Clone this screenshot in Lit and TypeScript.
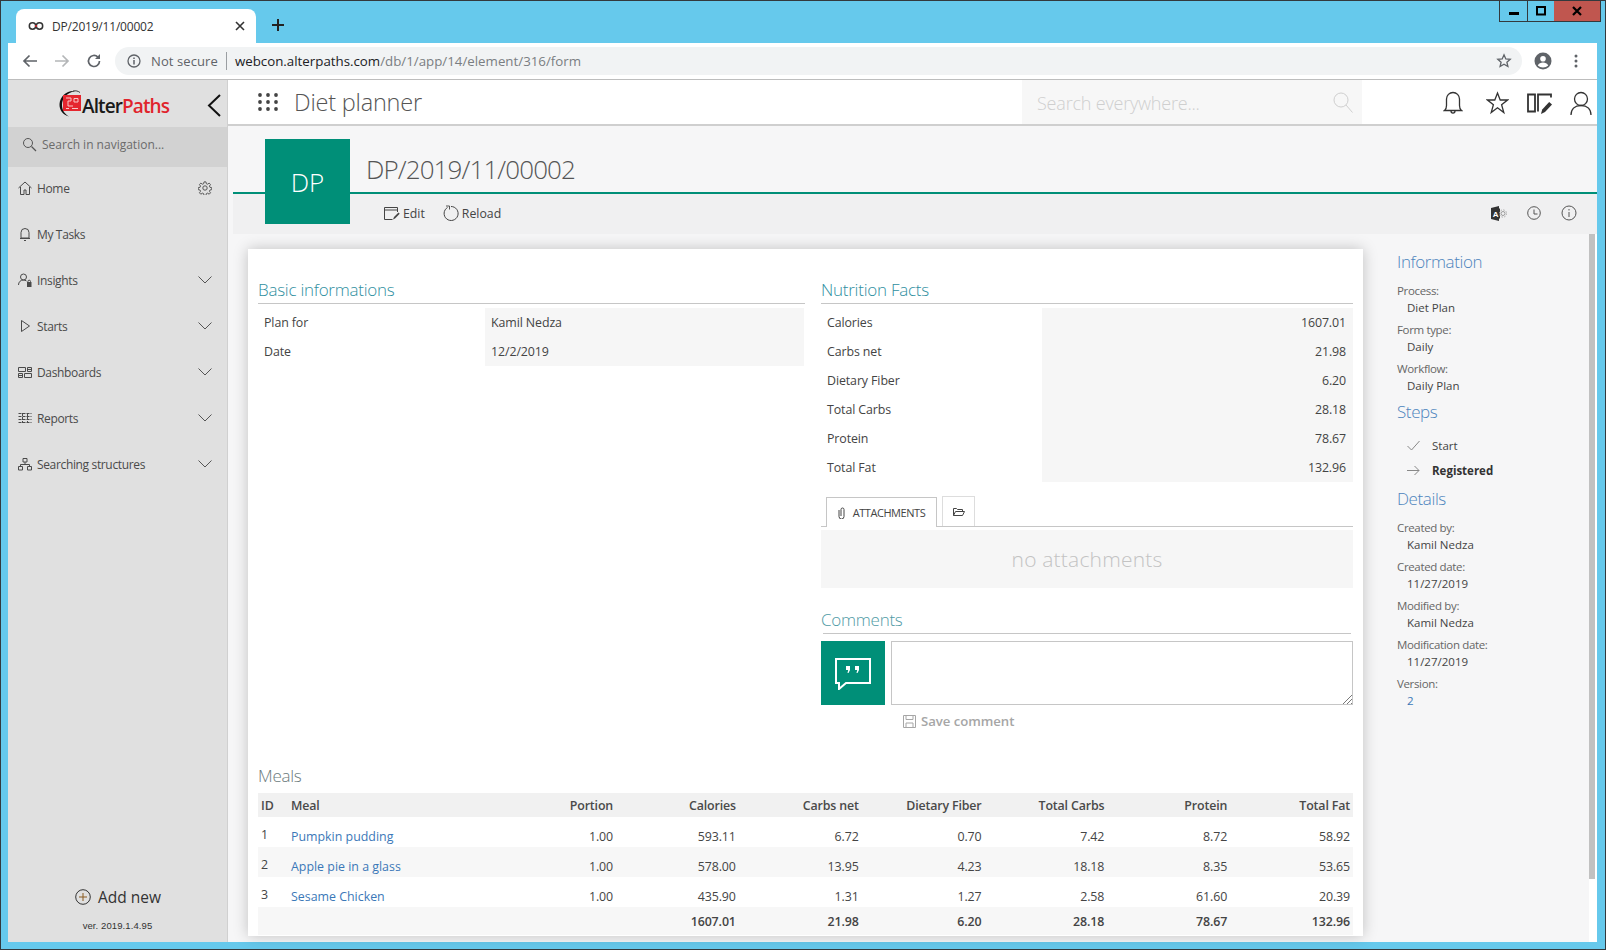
import { LitElement, html, css, svg } from "lit";
import { customElement } from "lit/decorators.js";

const ic = (w: number, h: number, body: unknown, cls = "") =>
  html`<svg class="ic ${cls}" width=${w} height=${h} viewBox="0 0 ${w} ${h}" fill="none" stroke="currentColor" stroke-width="1">${body}</svg>`;

const chevron = ic(14, 8, svg`<path d="M.5 .5 7 7 13.500 .5"/>`, "chev");

const nav = [
  { t: "Home", i: ic(14, 14, svg`<path d="M.5 7 7 1l6.500 6M2.500 6v7.500h3.500V9h2v4.500h3.500V6"/>`), gear: true },
  { t: "My Tasks", i: ic(14, 14, svg`<path d="M3 11V5.500a4 4 0 0 1 8 0V11zM2 11.500h10M6 13.500h2"/>`) },
  { t: "Insights", c: true, i: ic(14, 14, svg`<circle cx="5.500" cy="4" r="3"/><path d="M.5 12c0-3 2-5 5-5 1 0 2 .3 3 1"/><rect x="9.500" y="9.500" width="3.500" height="4" fill="currentColor"/><circle cx="11.200" cy="8.500" r="1.300"/>`) },
  { t: "Starts", c: true, i: ic(14, 14, svg`<path d="M3.500 1.500v11l8-5.500z"/>`) },
  { t: "Dashboards", c: true, i: ic(14, 14, svg`<path d="M.5 2.500h7v4h-7zM9.500 2.500h4v4h-4zM.5 8.500h4v4h-4zM6.500 8.500h7v4h-7zM9.500 4.500h4M.5 10.500h4"/>`) },
  { t: "Reports", c: true, i: ic(14, 14, svg`<path d="M.5 2.500h13M.5 5.500h13M.5 8.500h13M.5 11.500h13M4.500 2v10M9.500 2v10" stroke-dasharray="3 1"/>`) },
  { t: "Searching structures", c: true, i: ic(14, 14, svg`<path d="M5 1.500h4v3.500H5zM.5 9.500h4v3.500h-4zM9.500 9.500h4v3.500h-4zM7 5v2.500M2.500 9.500v-2h9v2"/>`) },
];

const nutrition = [
  ["Calories", "1607.01"], ["Carbs net", "21.98"], ["Dietary Fiber", "6.20"],
  ["Total Carbs", "28.18"], ["Protein", "78.67"], ["Total Fat", "132.96"],
];
const heads = ["Portion", "Calories", "Carbs net", "Dietary Fiber", "Total Carbs", "Protein", "Total Fat"];
const meals = [
  ["1", "Pumpkin pudding", "1.00", "593.11", "6.72", "0.70", "7.42", "8.72", "58.92"],
  ["2", "Apple pie in a glass", "1.00", "578.00", "13.95", "4.23", "18.18", "8.35", "53.65"],
  ["3", "Sesame Chicken", "1.00", "435.90", "1.31", "1.27", "2.58", "61.60", "20.39"],
];
const totals = ["", "1607.01", "21.98", "6.20", "28.18", "78.67", "132.96"];

@customElement("app-root")
export class AppRoot extends LitElement {
  static styles = css`
    :host { display: block; width: 1606px; height: 950px; overflow: hidden; font-family: "Open Sans", "Noto Sans", sans-serif; color: #444; font-size: 12px; }
    * { box-sizing: border-box; }
    .ic { display: block; flex: none; }
    .window { position: relative; width: 1606px; height: 950px; background: #66c9ec; border: 1px solid #33393d; display: flex; flex-direction: column; }
    .tabs { height: 42px; padding: 8px 0 0 15px; display: flex; align-items: flex-start; flex: none; }
    .tab { width: 240px; height: 34px; background: #fff; border-radius: 8px 8px 0 0; display: flex; align-items: center; padding: 0 11px 0 12px; color: #333; }
    .tab span { margin-left: 8px; flex: 1; font-size: 12px; letter-spacing: -.2px; }
    .plus { margin: 9px 0 0 15px; color: #222; }
    .winbtns { position: absolute; top: 0; right: 4px; height: 21px; display: flex; border: 1px solid #33393d; border-top: 0; }
    .winbtns div { display: flex; align-items: center; justify-content: center; height: 100%; color: #000; }
    .wmin { width: 28px; border-right: 1px solid #33393d; }
    .wmax { width: 26px; }
    .wclose { width: 46px; background: #c0564f; }
    .toolbar { height: 36px; margin: 0 8px 0 7px; background: #fff; display: flex; align-items: center; padding: 0 19px 0 14px; flex: none; color: #5f6368; }
    .toolbar .fwd { color: #b4b6b8; margin-left: 16px; }
    .toolbar .rld { margin-left: 16px; }
    .omni { flex: 1; height: 28px; margin: 0 12px 0 13px; border-radius: 14px; background: #f1f3f4; display: flex; align-items: center; padding: 0 10px 0 12px; font-size: 13px; }
    .omni .ns { margin-left: 10px; color: #5f6368; font-size: 13px; letter-spacing: .1px; }
    .omni .sep { width: 1px; height: 18px; background: #9a9ea2; margin: 0 8px; }
    .omni .url { flex: 1; color: #7a7e82; font-size: 13.300px; }
    .omni .url b { font-weight: 400; color: #202124; }
    .profile { margin-right: 22px; }
    .body { flex: 1; margin: 0 8px 7px 7px; display: flex; min-height: 0; border-top: 1px solid #bdbdbd; }
    .side { width: 220px; flex: none; background: #e0e0e0; border-right: 1px solid #d0d0d0; display: flex; flex-direction: column; }
    .logo { height: 47px; display: flex; align-items: center; position: relative; padding: 1px 0 0 50px; flex: none; }
    .logo .name { font: 600 19px "Open Sans", sans-serif; color: #1a1a1a; letter-spacing: -.9px; margin-top: 3px; }
    .logo .name em { font-style: normal; color: #e0242c; }
    .back { position: absolute; left: 199px; top: 14px; color: #111; }
    .navsearch { height: 40px; background: #d2d2d2; display: flex; align-items: center; gap: 5px; padding: 0 14px 6px; flex: none; color: #6b6b6b; font-size: 12px; }
    .navsearch svg { color: #555; }
    .items { flex: 1; }
    .item { height: 46px; display: flex; align-items: center; padding: 0 15px 0 10px; gap: 5px; color: #4a4a4a; font-size: 12px; letter-spacing: -.35px; }
    .item:first-child { height: 44px; padding-bottom: 2px; }
    .item span { flex: 1; }
    .item .chev, .item .gear { color: #555; }
    .add { display: flex; align-items: center; justify-content: center; gap: 7px; font-size: 15.500px; color: #333; margin: 1px 0 -1px 1px; }
    .ver { text-align: center; font-family: "Liberation Sans", sans-serif; font-size: 9.500px; color: #333; margin: 13px 0 10px; letter-spacing: .1px; height: 12px; }
    .main { flex: 1; min-width: 0; display: flex; flex-direction: column; background: #f6f6f7; }
    .topbar { height: 46px; flex: none; background: #fff; border-bottom: 2px solid #cfcfcf; display: flex; align-items: stretch; color: #333; }
    .apps { margin: 13px 0 0 30px; color: #444; }
    .topbar h1 { margin: 0 0 0 16px; width: 728px; font-weight: 300; font-size: 23.500px; color: #555; line-height: 44px; letter-spacing: -.2px; }
    .bigsearch { width: 340px; background: #f7f7f7; display: flex; align-items: center; justify-content: space-between; padding: 2px 9px 0 15px; color: #cfcfcf; font-weight: 300; font-size: 18px; letter-spacing: -.2px; }
    .tops { display: flex; align-items: center; flex: 1; padding: 2px 0 0 81px; gap: 18px; }
    .tops .bell { margin-right: 5px; }
    .head { height: 108px; flex: none; position: relative; padding: 0 0 0 5px; display: flex; flex-direction: column; }
    .title { height: 68px; border-bottom: 2px solid #008f78; padding: 23px 0 0 133px; font-weight: 300; font-size: 26px; line-height: 40px; color: #555; letter-spacing: -.9px; flex: none; white-space: nowrap; }
    .tile { position: absolute; left: 37px; top: 13px; width: 85px; height: 85px; background: #008f78; color: #fff; font-weight: 300; font-size: 26px; display: flex; align-items: center; justify-content: center; padding-top: 1px; }
    .actions { height: 40px; background: #f0f0f1; display: flex; align-items: center; padding: 0 20px 2px 151px; font-size: 12.300px; color: #444; }
    .actions .btn { display: flex; align-items: center; gap: 3px; margin-right: 18px; }
    .actions .right { margin-left: auto; display: flex; gap: 20px; align-items: center; color: #555; }
    .xl { font: 700 8px "Liberation Sans", sans-serif; fill: #fff; stroke: none; }
    .content { flex: 1; min-height: 0; display: flex; }
    .card { width: 1115px; flex: none; margin: 15px 0 6px 20px; background: #fff; box-shadow: 0 0 14px rgba(0, 0, 0, .22); padding: 30px 10px 0; overflow: hidden; }
    .cols { display: grid; grid-template-columns: 547px 532px; gap: 16px; height: 485px; }
    .h { font-weight: 300; font-size: 17px; color: #2f8f9f; height: 25px; line-height: 22px; border-bottom: 1px solid #c6c6c6; letter-spacing: -.25px; }
    .rows { margin-top: 4px; }
    .row { display: grid; height: 29px; align-items: center; font-size: 12.400px; letter-spacing: -.1px; color: #444; }
    .row.a { grid-template-columns: 227px 1fr; margin-right: 1px; }
    .row.b { grid-template-columns: 221px 1fr; }
    .row > :first-child { padding-left: 6px; }
    .row > :last-child { background: #f6f6f6; height: 100%; display: flex; align-items: center; padding: 0 7px 0 6px; }
    .row.b > :last-child { justify-content: flex-end; }
    .attach { display: flex; align-items: flex-end; padding-left: 5px; height: 30px; margin-top: 15px; border-bottom: 1px solid #c6c6c6; gap: 5px; }
    .attach > div { height: 30px; display: flex; align-items: center; justify-content: center; gap: 8px; background: #fff; border: 1px solid #c6c6c6; border-bottom: 0; font-size: 11px; letter-spacing: -.45px; color: #444; margin-bottom: -1px; }
    .attach .t1 { width: 111px; }
    .attach .t2 { width: 33px; border-color: #ddd; margin-bottom: 0; }
    .none { margin-top: 3px; height: 58px; background: #f6f6f6; color: #c3c3c3; font-size: 21px; font-weight: 300; display: flex; align-items: center; justify-content: center; letter-spacing: .2px; }
    .h.cm { margin: 21px 2px 0; color: #4f9aa5; text-indent: -2px; }
    .commentrow { display: flex; gap: 6px; margin-top: 7px; height: 64px; }
    .bubble { width: 64px; background: #008f78; color: #fff; display: flex; align-items: center; justify-content: center; }
    .area { flex: 1; border: 1px solid #c6c6c6; position: relative; }
    .grip { position: absolute; right: 0; bottom: 0; color: #555; }
    .save { display: flex; align-items: center; gap: 5px; margin: 7px 0 0 82px; color: #a6a6a6; font-size: 13.200px; font-weight: 600; letter-spacing: -.05px; }
    .mh { font-weight: 300; font-size: 17px; color: #6a7a7c; height: 29px; line-height: 24px; letter-spacing: -.25px; }
    .grid { display: grid; grid-template-columns: 33px 1fr repeat(7, 122.830px); font-size: 12.400px; letter-spacing: -.1px; color: #444; }
    .grid > div { display: flex; align-items: center; }
    .grid .r { justify-content: flex-end; padding-right: 3px; }
    .grid .th { background: #f1f1f1; height: 24px; font-weight: 600; color: #4a4a4a; letter-spacing: -.15px; }
    .grid .id { padding-left: 3px; }
    .grid .td { height: 30px; padding-top: 9px; }
    .grid .idc { padding-top: 5px; }
    .grid .alt { background: #f7f7f7; }
    .grid a { color: #3b78b8; letter-spacing: 0; }
    .grid .tot { background: #f7f7f7; height: 28px; padding-top: 1px; font-weight: 600; }
    .info { flex: 1; padding: 15px 0 0 34px; font-size: 11.500px; color: #555; line-height: 17px; }
    .info h3 { margin: 0; font-weight: 300; font-size: 17px; line-height: 26px; color: #4d84bd; letter-spacing: -.4px; height: 26px; }
    .info .l { color: #666; letter-spacing: -.35px; margin-top: 5px; }
    .info .v { color: #444; padding-left: 10px; }
    .info .v a { color: #3b78b8; }
    .info h3 + .l { margin-top: 7px; }
    .step { display: flex; align-items: center; gap: 12px; height: 25px; padding-left: 10px; color: #444; }
    .step svg { color: #888; }
    .step b { font-weight: 700; color: #333; }
    .steps { padding-top: 8px; height: 61px; }
    h3.s { margin-top: 5px; }
    .scroll { width: 8px; flex: none; padding-right: 2px; background: #fff; }
    .thumb { width: 6px; height: 645px; background: #c1c1c1; }
  `;

  render() {
    return html`<div class="window">
      <div class="tabs">
        <div class="tab">
          ${ic(16, 10, svg`<circle cx="4.500" cy="5" r="3.200" stroke-width="1.500" stroke="#333"/><circle cx="11.500" cy="5" r="3.200" stroke-width="1.500" stroke="#333"/><path d="M7 5h2" stroke="#e0242c" stroke-width="1.500"/>`)}
          <span>DP/2019/11/00002</span>
          ${ic(10, 10, svg`<path d="M1 1l8 8M9 1l-8 8" stroke-width="1.600"/>`)}
        </div>
        <div class="plus">${ic(14, 14, svg`<path d="M7 1v12M1 7h12" stroke-width="2"/>`)}</div>
      </div>
      <div class="winbtns">
        <div class="wmin">${ic(10, 10, svg`<path d="M0 7.500h10" stroke-width="3"/>`)}</div>
        <div class="wmax">${ic(10, 10, svg`<rect x="1" y="1" width="8" height="7.500" stroke-width="2"/>`)}</div>
        <div class="wclose">${ic(10, 10, svg`<path d="M1 1l8 8M9 1l-8 8" stroke-width="2.200"/>`)}</div>
      </div>
      <div class="toolbar">
        ${ic(16, 14, svg`<path d="M15 7H2M7.500 1.500 2 7l5.500 5.500" stroke-width="1.700"/>`)}
        <div class="fwd">${ic(16, 14, svg`<path d="M1 7h13M8.500 1.500 14 7l-5.500 5.500" stroke-width="1.700"/>`)}</div>
        <div class="rld">${ic(16, 16, svg`<path d="M13.500 8a5.500 5.500 0 1 1-1.600-3.900" stroke-width="1.700"/><path d="M14 1v5h-5z" fill="currentColor" stroke="none"/>`)}</div>
        <div class="omni">
          ${ic(14, 14, svg`<circle cx="7" cy="7" r="6" stroke-width="1.300"/><path d="M7 6v4.500M7 3.500v1.500" stroke-width="1.500"/>`)}
          <span class="ns">Not secure</span><i class="sep"></i>
          <span class="url"><b>webcon.alterpaths.com</b>/db/1/app/14/element/316/form</span>
          ${ic(16, 16, svg`<path d="M8 1.800l1.800 4.100 4.400.4-3.300 2.900 1 4.300L8 11.200l-3.900 2.300 1-4.300-3.300-2.900 4.400-.4z" stroke-width="1.300"/>`)}
        </div>
        <div class="profile">${ic(18, 18, svg`<circle cx="9" cy="9" r="8.500" fill="currentColor" stroke="none"/><circle cx="9" cy="6.800" r="2.800" fill="#fff" stroke="none"/><path d="M3.800 13.500c1-2.200 3-3 5.200-3s4.200.8 5.200 3c-1.300 1.300-3.200 2-5.200 2s-3.900-.7-5.200-2z" fill="#fff" stroke="none"/>`)}</div>
        ${ic(4, 14, svg`<circle cx="2" cy="2" r="1.500" fill="currentColor" stroke="none"/><circle cx="2" cy="7" r="1.500" fill="currentColor" stroke="none"/><circle cx="2" cy="12" r="1.500" fill="currentColor" stroke="none"/>`)}
      </div>
      <div class="body">
        <aside class="side">
          <div class="logo">
            ${ic(24, 30, svg`<path d="M17 2C9 1 2 7 1.500 15c-.3 6 3.500 11 9.500 12.500C6.500 25 4 21 4 16 4 10 8 4 17 2z" fill="#111" stroke="none"/><path d="M15 2c3-.5 5 0 7 1.500" stroke="#111" stroke-width=".8"/><rect x="5" y="6" width="18" height="16" fill="#e5262e" stroke="none"/><path d="M8 9h5v3h-3v5h5M16 9.500h4v3.500h-4zM8 19.500h3M14 19.500h6" stroke="#f8c8c8" stroke-width="1"/>`)}
            <span class="name">Alter<em>Paths</em></span>
            <div class="back">${ic(14, 23, svg`<path d="M13 1 2 11.500 13 22" stroke-width="2"/>`)}</div>
          </div>
          <div class="navsearch">${ic(15, 15, svg`<circle cx="6" cy="6" r="4.500"/><path d="M9.500 9.500 14 14" stroke-width="1.200"/>`)}<span>Search in navigation...</span></div>
          <div class="items">
            ${nav.map((n) => html`<div class="item">${n.i}<span>${n.t}</span>
              ${n.c ? chevron : ""}
              ${n.gear ? ic(14, 14, svg`<circle cx="7" cy="7" r="2.200"/><path d="M6 .7h2l.4 1.900 1.300.5 1.600-1.100 1.400 1.400-1.100 1.600.5 1.300 1.900.4v2l-1.900.4-.5 1.300 1.100 1.600-1.400 1.400-1.600-1.100-1.300.5-.4 1.900H6l-.4-1.900-1.300-.5-1.600 1.100-1.400-1.400 1.100-1.600-.5-1.300-1.900-.4v-2l1.900-.4.5-1.300L1.300 3.400l1.400-1.400 1.600 1.100 1.300-.5z" transform="translate(.2 .2) scale(.97)"/>`, "gear") : ""}
            </div>`)}
          </div>
          <div class="add">${ic(16, 16, svg`<circle cx="8" cy="8" r="7.300"/><path d="M8 4v8M4 8h8" stroke="#8a5a20"/>`)}<span>Add new</span></div>
          <div class="ver">ver. 2019.1.4.95</div>
        </aside>
        <div class="main">
          <div class="topbar">
            <div class="apps">${ic(20, 18, svg`${[2, 9, 16].map((y) => [2, 10, 18].map((x) => svg`<circle cx=${x} cy=${y} r="1.900" fill="currentColor" stroke="none"/>`))}`)}</div>
            <h1>Diet planner</h1>
            <div class="bigsearch"><span>Search everywhere...</span>${ic(20, 22, svg`<circle cx="8" cy="8" r="7"/><path d="M13 13l6.500 7.500"/>`)}</div>
            <div class="tops">
              ${ic(20, 25, svg`<path d="M1.500 19.500c1.500-1 2-2.500 2-5V8a6.500 6.500 0 0 1 13 0v6.500c0 2.500.5 4 2 5zM8 20c0 2.800 4 2.800 4 0" stroke-width="1.300"/>`, "bell")}
              ${ic(23, 24, svg`<path d="M11.500 2l2.700 7h7.300l-5.900 4.700 2.200 7.800-6.300-4.700-6.300 4.700 2.200-7.800L1.500 9h7.300z" stroke-width="1.300"/>`)}
              ${ic(25, 24, svg`<path d="M1 3.500h7v17H1zM11 20.500v-17h13v3" stroke-width="1.800"/><path d="M14 23l1.200-4.500 7-7.500 2.800 2.500-7 7.500z" fill="#333" stroke="none"/>`)}
              ${ic(22, 25, svg`<circle cx="11" cy="8" r="6.500" stroke-width="1.300"/><path d="M1 24c0-6 4-9.500 10-9.500S21 18 21 24" stroke-width="1.300"/>`)}
            </div>
          </div>
          <div class="head">
            <div class="title">DP/2019/11/00002</div>
            <div class="tile">DP</div>
            <div class="actions">
              <div class="btn">${ic(16, 15, svg`<path d="M13.500 6V1.500H.5v12h8M.5 4h13"/><path d="M9 13.500l1-2.500 4.500-4.500 1.200 1.200L11 12.500z" fill="currentColor" stroke="none"/>`)}<span>Edit</span></div>
              <div class="btn">${ic(16, 16, svg`<path d="M4.500 2.500a7 7 0 1 0 3.500-1"/><path d="M3 1h3.500v3.500" stroke-width=".9"/>`)}<span>Reload</span></div>
              <div class="right">
                ${ic(16, 15, svg`<path d="M0 2 8 0v15l-8-2z" fill="#333" stroke="none"/><path d="M8 2.500h1v10H8z" fill="#333" stroke="none"/><text x="1.800" y="10.500" class="xl">A</text><circle cx="12" cy="7.500" r="2" stroke="#999"/><circle cx="12" cy="7.500" r="3.600" stroke="#aaa" stroke-dasharray="1.500 1.300"/>`)}
                ${ic(14, 14, svg`<circle cx="7" cy="7" r="6.300"/><path d="M7 3.500V8h3.500"/>`)}
                ${ic(16, 16, svg`<circle cx="8" cy="8" r="7"/><path d="M8 7v5M8 4v1.500"/>`)}
              </div>
            </div>
          </div>
          <div class="content">
            <div class="card">
              <div class="cols">
                <section>
                  <div class="h">Basic informations</div>
                  <div class="rows">
                    <div class="row a"><div>Plan for</div><div>Kamil Nedza</div></div>
                    <div class="row a"><div>Date</div><div>12/2/2019</div></div>
                  </div>
                </section>
                <section>
                  <div class="h">Nutrition Facts</div>
                  <div class="rows">
                    ${nutrition.map(([k, v]) => html`<div class="row b"><div>${k}</div><div>${v}</div></div>`)}
                  </div>
                  <div class="attach">
                    <div class="t1">${ic(7, 12, svg`<path d="M1 3v6.500a2.500 2.500 0 0 0 5 0V2.500a1.500 1.500 0 0 0-3 0V9"/>`)}<span>ATTACHMENTS</span></div>
                    <div class="t2">${ic(12, 9, svg`<path d="M.5 8.500v-7h3l1 1h5v2M.5 8.500l2-4h9l-2 4z"/>`)}</div>
                  </div>
                  <div class="none">no attachments</div>
                  <div class="h cm">Comments</div>
                  <div class="commentrow">
                    <div class="bubble">${ic(36, 34, svg`<path d="M1 3h34v24H11l-7 6v-6H1z" stroke-width="2"/><path d="M11 10h4v4l-1.500 3h-1l.7-3H11zM20 10h4v4l-1.500 3h-1l.7-3H20z" fill="#fff" stroke="none"/>`)}</div>
                    <div class="area"><div class="grip">${ic(10, 10, svg`<path d="M1 10 10 1M5 10l5-5M9 10l1-1" stroke-width=".8"/>`)}</div></div>
                  </div>
                  <div class="save">${ic(13, 13, svg`<path d="M.5.5h12v12H.5zM3 .5v4h7v-4M3 12.500V8h7v4.500"/>`)}<span>Save comment</span></div>
                </section>
              </div>
              <div class="mh">Meals</div>
              <div class="grid">
                <div class="th id">ID</div><div class="th">Meal</div>
                ${heads.map((h) => html`<div class="th r">${h}</div>`)}
                ${meals.map((m, i) => html`
                  <div class="td idc id ${i % 2 ? "alt" : ""}">${m[0]}</div>
                  <div class="td ${i % 2 ? "alt" : ""}"><a>${m[1]}</a></div>
                  ${m.slice(2).map((v) => html`<div class="td r ${i % 2 ? "alt" : ""}">${v}</div>`)}
                `)}
                <div class="tot"></div><div class="tot"></div>
                ${totals.map((v) => html`<div class="tot r">${v}</div>`)}
              </div>
            </div>
            <div class="info">
              <h3>Information</h3>
              <div class="l">Process:</div><div class="v">Diet Plan</div>
              <div class="l">Form type:</div><div class="v">Daily</div>
              <div class="l">Workflow:</div><div class="v">Daily Plan</div>
              <h3 class="s">Steps</h3>
              <div class="steps">
                <div class="step">${ic(13, 11, svg`<path d="M.5 6l4 4 8-9"/>`)}<span>Start</span></div>
                <div class="step">${ic(13, 11, svg`<path d="M0 5.500h12M7.500 1l4.500 4.500L7.500 10"/>`)}<b>Registered</b></div>
              </div>
              <h3>Details</h3>
              <div class="l">Created by:</div><div class="v">Kamil Nedza</div>
              <div class="l">Created date:</div><div class="v">11/27/2019</div>
              <div class="l">Modified by:</div><div class="v">Kamil Nedza</div>
              <div class="l">Modification date:</div><div class="v">11/27/2019</div>
              <div class="l">Version:</div><div class="v"><a>2</a></div>
            </div>
            <div class="scroll"><div class="thumb"></div></div>
          </div>
        </div>
      </div>
    </div>`;
  }
}
